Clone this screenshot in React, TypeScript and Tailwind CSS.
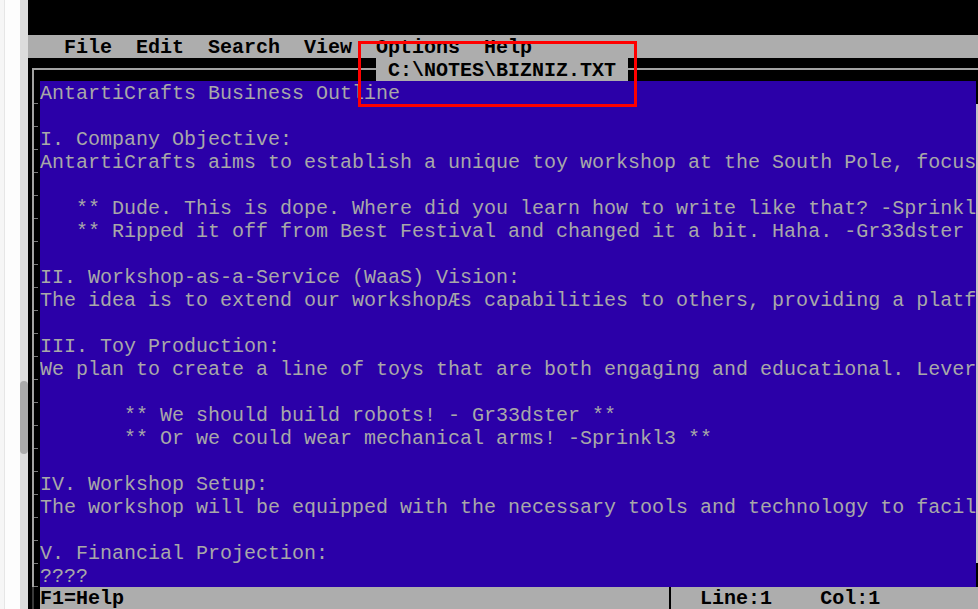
import React from "react";

const lines: string[] = [
  "AntartiCrafts Business Outline",
  "",
  "I. Company Objective:",
  "AntartiCrafts aims to establish a unique toy workshop at the South Pole, focusing on innovative toys.",
  "",
  "   ** Dude. This is dope. Where did you learn how to write like that? -Sprinkl3 **",
  "   ** Ripped it off from Best Festival and changed it a bit. Haha. -Gr33dster **",
  "",
  "II. Workshop-as-a-Service (WaaS) Vision:",
  "The idea is to extend our workshop\u00C6s capabilities to others, providing a platform for all.",
  "",
  "III. Toy Production:",
  "We plan to create a line of toys that are both engaging and educational. Leveraging tech.",
  "",
  "       ** We should build robots! - Gr33dster **",
  "       ** Or we could wear mechanical arms! -Sprinkl3 **",
  "",
  "IV. Workshop Setup:",
  "The workshop will be equipped with the necessary tools and technology to facilitate it.",
  "",
  "V. Financial Projection:",
  "????",
];

const mono = "font-['Liberation_Mono','DejaVu_Sans_Mono',monospace] text-[20px]";

export default function App() {
  return (
    <div className="relative flex h-[609px] w-[978px] overflow-hidden bg-black">
      {/* left browser strip */}
      <div className="flex h-full w-[28px] shrink-0">
        <div className="h-full w-[4px] bg-[#f6f6f6]" />
        <div className="h-full w-[1px] bg-[#e6e6e6]" />
        <div className="h-full w-[15px] bg-[#fdfdfd]" />
        <div className="flex h-full w-[8px] flex-col bg-[#dcdcdc]">
          <div className="h-[381px] shrink-0" />
          <div className="h-[73px] w-[8px] rounded-full bg-[#ababab]" />
        </div>
      </div>

      {/* DOS editor */}
      <div className={`flex w-[950px] shrink-0 flex-col bg-black ${mono}`}>
        <div className="h-[35px] shrink-0" />
        {/* menu bar */}
        <div className="h-[23px] shrink-0 whitespace-pre bg-[#adadad] font-bold leading-[25px] text-black">
          {"   File  Edit  Search  View  Options  Help"}
        </div>
        {/* title row */}
        <div className="flex h-[23px] shrink-0">
          <div className="w-[4px]" />
          <div className="mt-[10px] h-[13px] w-[344px] border-l-2 border-t-2 border-[#a3a3a3]" />
          <div className="h-[23px] w-[252px] whitespace-pre bg-[#adadad] font-bold leading-[25px] text-black">
            {" C:\\NOTES\\BIZNIZ.TXT "}
          </div>
          <div className="mt-[10px] h-[2px] flex-1 bg-[#a3a3a3]" />
        </div>
        {/* body */}
        <div className="flex h-[506px] shrink-0">
          <div className="flex w-[12px] flex-col">
            {lines.map((_, i) => (
              <div key={i} className="flex h-[23px]">
                <div className="ml-[4px] h-full w-[2px] bg-[#a3a3a3]" />
                <div className="flex flex-col justify-end">
                  <div className="h-[1px] w-[4px] bg-[#7a7a7a]" />
                </div>
              </div>
            ))}
          </div>
          <div className="w-[936px] overflow-hidden bg-[#2b00a8] text-[#a8a8a8]">
            {lines.map((l, i) => (
              <div key={i} className="h-[23px] overflow-hidden whitespace-pre leading-[25px]">
                {l}
              </div>
            ))}
          </div>
          <div className="flex w-[2px] flex-col">
            <div className="h-[23px] bg-black" />
            <div className="h-[459px] bg-[#c4c4c4]" />
            <div className="flex-1 bg-black" />
          </div>
        </div>
        {/* status bar */}
        <div className="flex h-[23px] shrink-0">
          <div className="flex w-[12px]">
            <div className="ml-[4px] h-full w-[2px] bg-[#3a3a3a]" />
          </div>
          <div className="flex flex-1 items-start whitespace-pre bg-[#adadad] leading-[24px] text-black">
            <span className="font-bold">{"F1=Help"}</span>
            <span>{" ".repeat(45)}</span>
            <span className="flex h-[23px] w-[12px] justify-center">
              <span className="h-full w-[2px] bg-black" />
            </span>
            <span className="font-bold">{"  Line:1    Col:1"}</span>
          </div>
        </div>
      </div>

      {/* red annotation box */}
      <div className="absolute left-[358px] top-[41px] h-[66px] w-[279px] border-[3px] border-[#ff0000]" />
    </div>
  );
}
